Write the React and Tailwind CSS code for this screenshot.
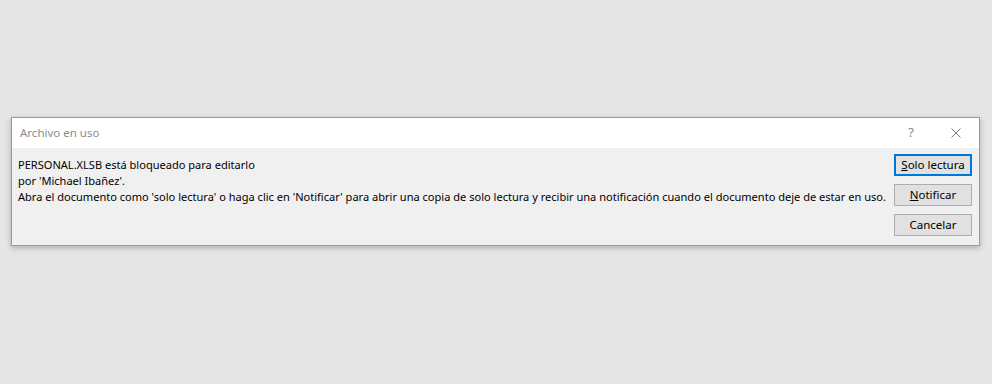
export default function App() {
  const btn = 'w-[78px] h-[22px] bg-[#e1e1e1] text-[11.5px] text-black flex items-center justify-center leading-none shrink-0'
  return (
    <div className="w-[992px] h-[384px] bg-[#e6e6e6] pt-[117px] pl-[11px] font-['Noto_Sans',sans-serif]">
      <div className="w-[969px] border border-[#9a9a9a] bg-[#f0f0f0] shadow-[0_2px_6px_rgba(0,0,0,0.25)]">
        <div className="h-[30px] bg-white flex items-center pl-[8px] pr-[18px]">
          <div className="text-[11.5px] text-[#8c8c8c] flex-1">Archivo en uso</div>
          <div className="text-[13px] text-[#8c8c8c] mr-[37px]">?</div>
          <svg width="10" height="10" viewBox="0 0 10 10">
            <path d="M0.5 0.5 L9.5 9.5 M9.5 0.5 L0.5 9.5" stroke="#777" strokeWidth="1" />
          </svg>
        </div>
        <div className="h-[97px] flex pl-[6px] pr-[7px] pt-[6px]">
          <div className="flex-1 min-w-0 text-[11.05px] leading-[16px] text-black pt-[3px]">
            <div>PERSONAL.XLSB está bloqueado para editarlo</div>
            <div>por 'Michael Ibañez'.</div>
            <div className="whitespace-nowrap">Abra el documento como 'solo lectura' o haga clic en 'Notificar' para abrir una copia de solo lectura y recibir una notificación cuando el documento deje de estar en uso.</div>
          </div>
          <div className="flex flex-col gap-[8px]">
            <div className={btn + ' border-2 border-[#0078d7]'}><span><u>S</u>olo lectura</span></div>
            <div className={btn + ' border border-[#adadad]'}><span><u>N</u>otificar</span></div>
            <div className={btn + ' border border-[#adadad]'}>Cancelar</div>
          </div>
        </div>
      </div>
    </div>
  )
}
